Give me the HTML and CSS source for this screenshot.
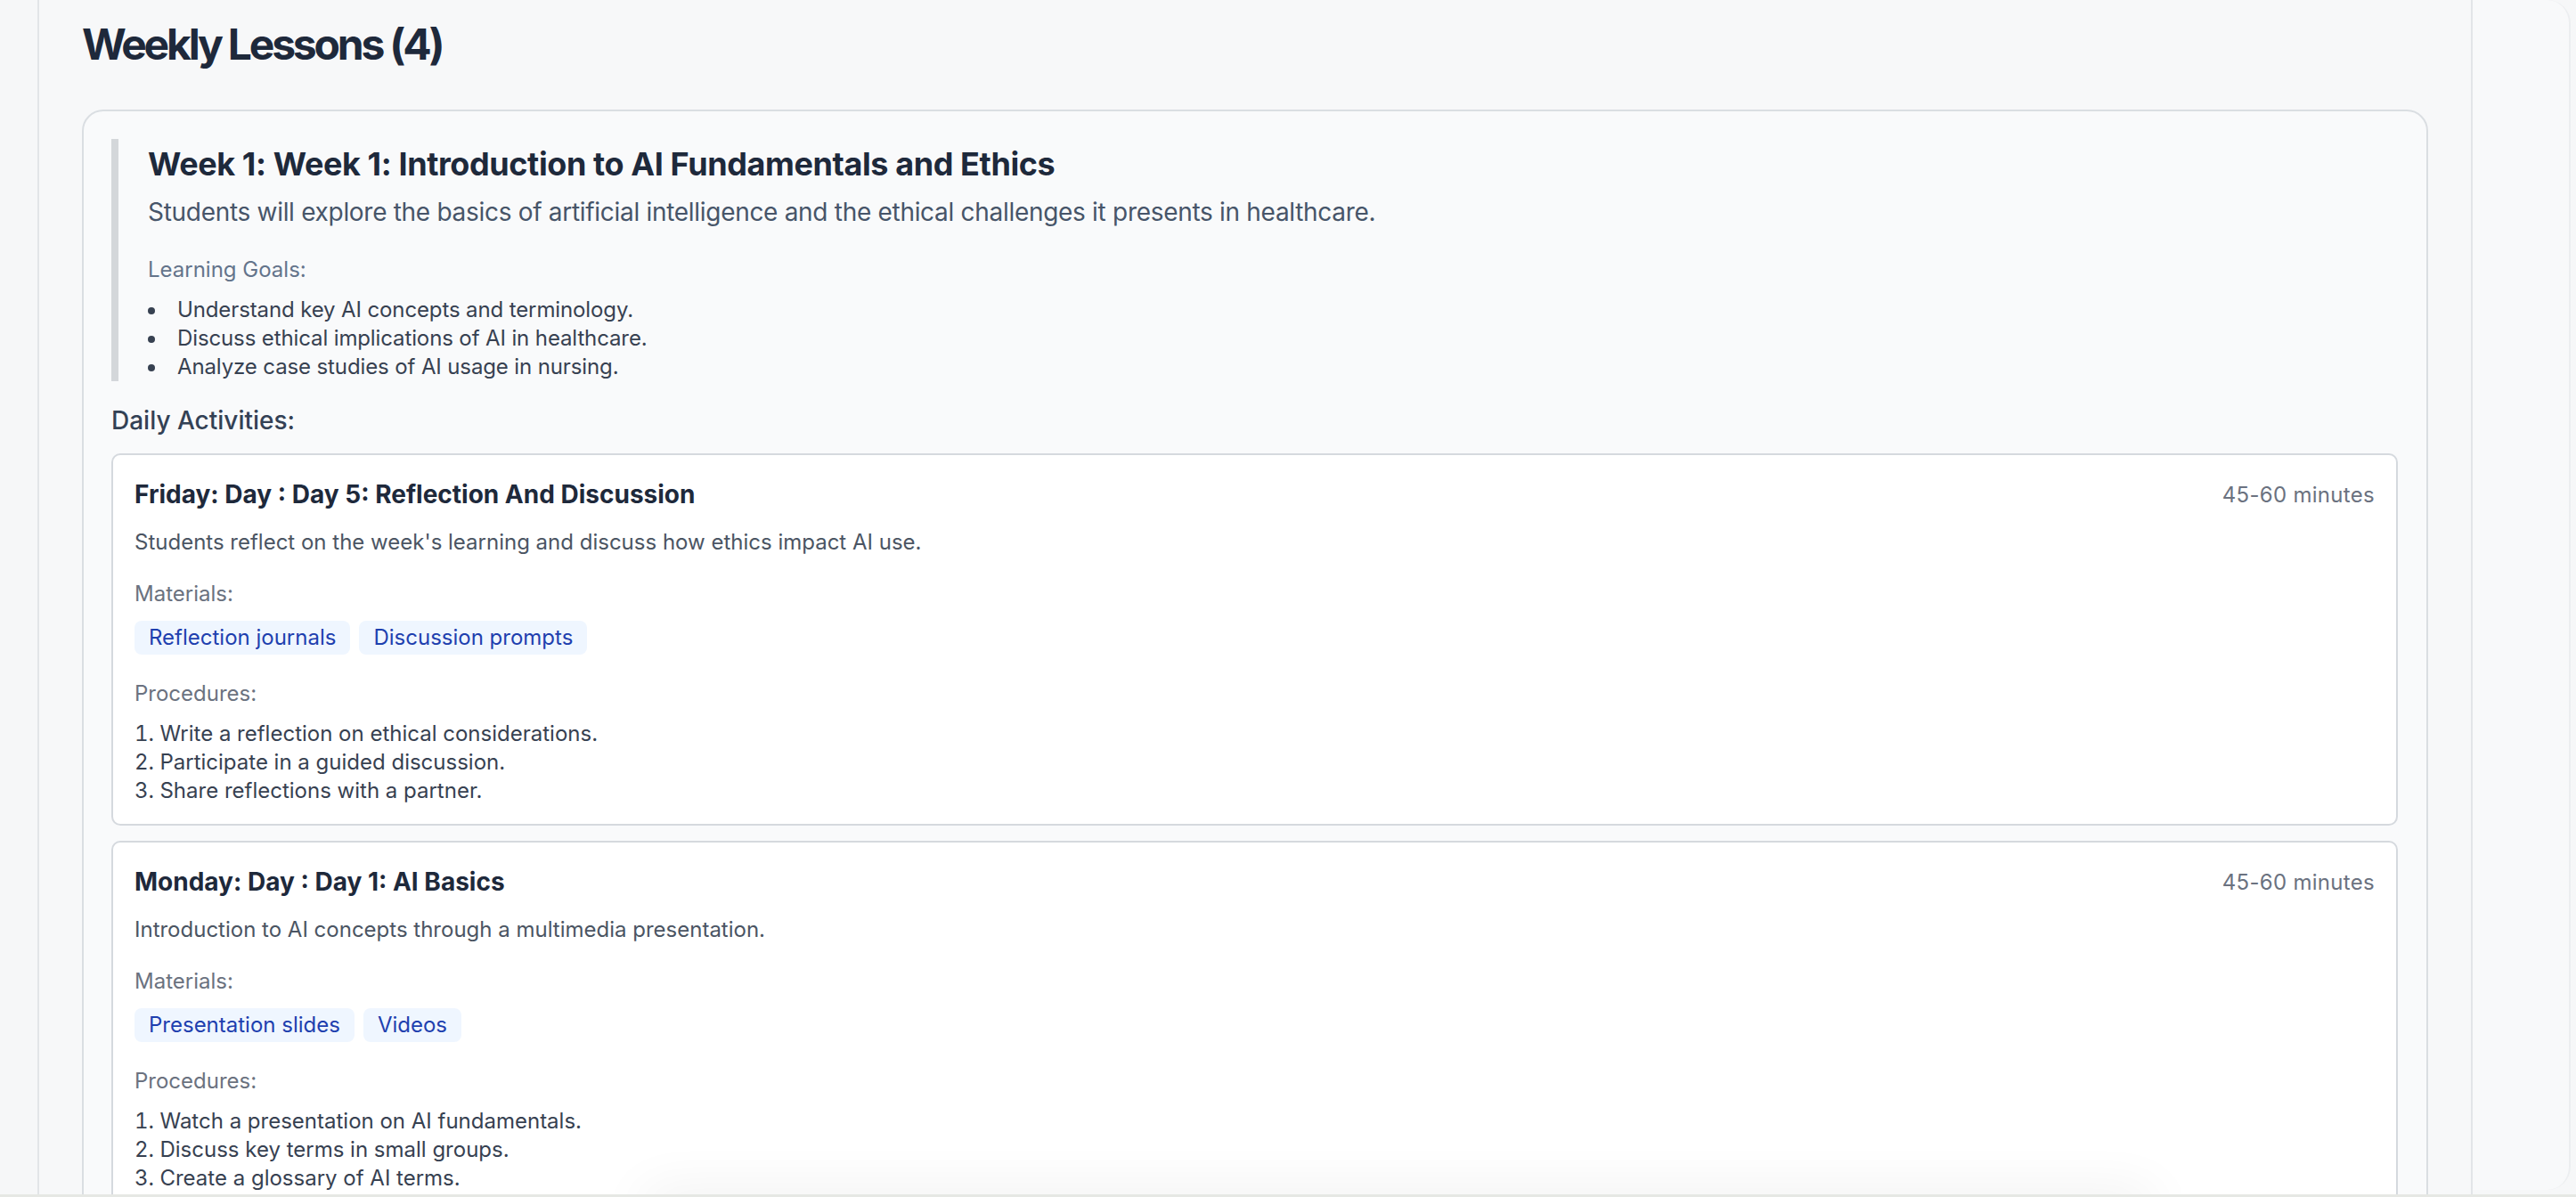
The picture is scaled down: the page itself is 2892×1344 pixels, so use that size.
FILE: index.html
```html
<!DOCTYPE html>
<html lang="en">
  <head>
    <meta charset="UTF-8" />
    <meta name="viewport" content="width=device-width, initial-scale=1.0" />
    <title>Weekly Lessons</title>
    <link rel="stylesheet" href="styles.css">
  </head>
  <body>
    <div class="layout">
      <!-- Main content -->
      <main class="content">
        <h2 class="section-title">Weekly Lessons (4)</h2>

        <div class="week-card">
          <div class="week-head">
            <h3>Week 1: Week 1: Introduction to AI Fundamentals and Ethics</h3>
            <p class="week-desc">Students will explore the basics of artificial intelligence and the ethical challenges it presents in healthcare.</p>
            <p class="goals-label">Learning Goals:</p>
            <ul class="goals">
              <li>Understand key AI concepts and terminology.</li>
              <li>Discuss ethical implications of AI in healthcare.</li>
              <li>Analyze case studies of AI usage in nursing.</li>
            </ul>
          </div>

          <h4 class="daily-title">Daily Activities:</h4>

          <div class="activity">
            <div class="activity-head">
              <h5>Friday: Day : Day 5: Reflection And Discussion</h5>
              <span class="duration">45-60 minutes</span>
            </div>
            <p class="activity-desc">Students reflect on the week's learning and discuss how ethics impact AI use.</p>
            <p class="label">Materials:</p>
            <div class="tags">
              <span class="tag">Reflection journals</span>
              <span class="tag">Discussion prompts</span>
            </div>
            <p class="label procedures">Procedures:</p>
            <ol class="steps">
              <li>Write a reflection on ethical considerations.</li>
              <li>Participate in a guided discussion.</li>
              <li>Share reflections with a partner.</li>
            </ol>
          </div>

          <div class="activity">
            <div class="activity-head">
              <h5>Monday: Day : Day 1: AI Basics</h5>
              <span class="duration">45-60 minutes</span>
            </div>
            <p class="activity-desc">Introduction to AI concepts through a multimedia presentation.</p>
            <p class="label">Materials:</p>
            <div class="tags">
              <span class="tag">Presentation slides</span>
              <span class="tag">Videos</span>
            </div>
            <p class="label procedures">Procedures:</p>
            <ol class="steps">
              <li>Watch a presentation on AI fundamentals.</li>
              <li>Discuss key terms in small groups.</li>
              <li>Create a glossary of AI terms.</li>
            </ol>
          </div>
        </div>
      </main>

      <!-- Right panel -->
      <aside class="side-panel"></aside>
    </div>

    <div class="bottom-glow"></div>
    <div class="bottom-edge"></div>
  </body>
</html>
```

FILE: styles.css
```css
body {
  margin: 0;
  padding: 0;
  background-color: #f6f7f8;
  font-family: Inter, "Noto Sans", Arial, sans-serif;
  height: 1344px;
  overflow: hidden;
}
.layout {
  display: flex;
  height: 1344px;
}
.content {
  margin-left: 42px;
  width: 2634px;
  padding: 0 48px;
  border-left: 2px solid #e2e5e8;
  border-right: 2px solid #e2e5e8;
  background-color: #f7f8f9;
}
.side-panel {
  flex: 1;
  margin-right: 6px;
  border-right: 2px solid #eceef0;
  border-radius: 0 26px 26px 0;
  margin-bottom: 8px;
  background-color: #f8f9fa;
}

/* Section heading */
.section-title {
  margin: 18px 0 41px;
  font-size: 48px;
  line-height: 64px;
  font-weight: 700;
  letter-spacing: -3.2px;
  color: #1e293b;
}

/* Week card */
.week-card {
  border: 2px solid #dadee2;
  border-radius: 24px;
  background-color: #f9fafb;
  padding: 31px 32px 32px 31px;
}
.week-head {
  border-left: 8px solid #d4d7da;
  padding-left: 33px;
}
.week-head h3 {
  margin: 0;
  font-size: 36px;
  line-height: 56px;
  font-weight: 700;
  letter-spacing: -0.4px;
  color: #1e293b;
}
.week-desc {
  margin: 6px 0 0;
  font-size: 28px;
  line-height: 40px;
  letter-spacing: -0.3px;
  color: #475569;
}
.goals-label {
  margin: 29px 0 0;
  font-size: 24px;
  line-height: 32px;
  color: #64748b;
}
.goals {
  margin: 13px 0 0;
  padding: 0;
  list-style: disc inside;
  font-size: 24px;
  line-height: 32px;
  letter-spacing: -0.12px;
  color: #374151;
}
.daily-title {
  margin: 24px 0 17px;
  font-size: 28px;
  line-height: 40px;
  font-weight: 500;
  color: #334155;
}

/* Activity cards */
.activity {
  background-color: #ffffff;
  border: 2px solid #d5d9de;
  border-radius: 10px;
  padding: 24px 24px 21px;
  margin-bottom: 17px;
}
.activity-head {
  display: flex;
  justify-content: space-between;
  align-items: center;
}
.activity-head h5 {
  margin: 0;
  font-size: 28px;
  line-height: 40px;
  font-weight: 700;
  color: #1e293b;
}
.duration {
  font-size: 24px;
  color: #6b7280;
  letter-spacing: 0.3px;
}
.activity-desc {
  margin: 18px 0 0;
  font-size: 24px;
  line-height: 32px;
  color: #4b5563;
}
.label {
  margin: 26px 0 0;
  font-size: 24px;
  line-height: 32px;
  color: #6b7280;
}
.label.procedures {
  margin-top: 28px;
}
.tags {
  display: flex;
  gap: 10px;
  margin-top: 14px;
}
.tag {
  background-color: #eff6ff;
  color: #1e40af;
  font-size: 24px;
  line-height: 30px;
  padding: 4px 16px;
  border-radius: 8px;
}
.steps {
  margin: 13px 0 0;
  padding: 0;
  list-style: decimal inside;
  font-size: 24px;
  line-height: 32px;
  color: #374151;
}

/* Bottom edge of the window */
.bottom-glow {
  position: fixed;
  left: 720px;
  width: 1700px;
  bottom: -40px;
  height: 40px;
  border-radius: 20px;
  box-shadow: 0 -6px 60px rgba(0, 0, 0, 0.07);
}
.bottom-edge {
  position: fixed;
  left: 0;
  right: 0;
  bottom: 0;
  height: 3px;
  background-color: #e6e8e4;
}
```
